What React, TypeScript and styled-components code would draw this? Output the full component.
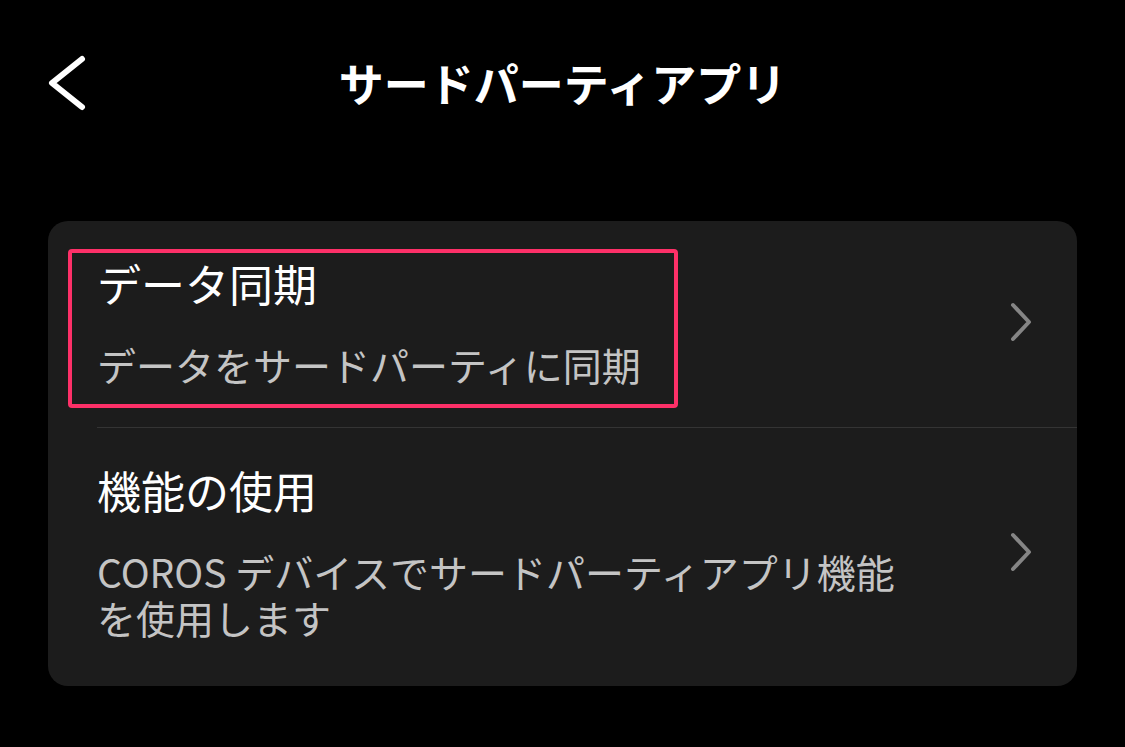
import React, { FC } from "react";
import styled, { createGlobalStyle } from "styled-components";

const GlobalStyles = createGlobalStyle`
html, body {
    margin: 0;
    padding: 0;
    background: #000;
}
body {
    font-family: "Noto Sans CJK JP", "Noto Sans", sans-serif;
    color: #fff;
    width: 1125px;
    height: 747px;
    overflow: hidden;
}
`;

const Page = styled.div`
    display: flex;
    flex-direction: column;
    padding: 0 48px;
`;

const Header = styled.header`
    height: 166px;
    margin-bottom: 55px;
    display: grid;
    grid-template-columns: 60px 1fr 60px;
    align-items: center;
`;

const BackButton = styled.button`
    background: none;
    border: 0;
    padding: 0;
    width: 40px;
    height: 56px;
    display: flex;
    align-items: center;
    cursor: pointer;
    svg {
        display: block;
    }
`;

const Title = styled.h1`
    margin: 0;
    text-align: center;
    font-size: 45px;
    line-height: 56px;
    font-weight: 700;
`;

const Card = styled.section`
    background: #1c1c1c;
    border-radius: 20px;
`;

const Row = styled.div<{ $last?: boolean }>`
    display: flex;
    align-items: center;
    margin-left: 49px;
    padding: 36px 42px ${(p) => (p.$last ? "46px" : "40px")} 0;
    border-bottom: ${(p) => (p.$last ? "none" : "1.5px solid #343434")};
`;

const TextBlock = styled.div<{ $marked?: boolean }>`
    position: relative;
    flex: 0 1 830px;
    &::after {
        content: "";
        display: ${(p) => (p.$marked ? "block" : "none")};
        position: absolute;
        left: -29px;
        top: -8px;
        width: 610px;
        bottom: -21px;
        border: 4px solid #fd3068;
        border-radius: 4px;
        box-sizing: border-box;
        pointer-events: none;
    }
`;

const RowTitle = styled.div`
    font-size: 44px;
    line-height: 52px;
    color: #fff;
`;

const RowSub = styled.div`
    margin-top: 32px;
    font-size: 39px;
    line-height: 46px;
    color: #c4c4c4;
`;

const ChevronBox = styled.span`
    margin-left: auto;
    display: flex;
    svg {
        display: block;
    }
`;

const Chevron: FC = () => (
    <ChevronBox>
        <svg width="28" height="40" viewBox="0 0 28 40">
            <path
                d="M6 3 L22 20 L6 37"
                fill="none"
                stroke="#858585"
                strokeWidth="4"
                strokeLinecap="round"
                strokeLinejoin="round"
            />
        </svg>
    </ChevronBox>
);

const items = [
    {
        title: "データ同期",
        sub: "データをサードパーティに同期",
        marked: true,
    },
    {
        title: "機能の使用",
        sub: "COROS デバイスでサードパーティアプリ機能を使用します",
        marked: false,
    },
];

const App: FC = () => {
    return (
        <>
            <GlobalStyles />
            <Page>
                <Header>
                    <BackButton aria-label="戻る">
                        <svg width="40" height="56" viewBox="0 0 40 56">
                            <path
                                d="M34 4 L4 28 L34 52"
                                fill="none"
                                stroke="#fff"
                                strokeWidth="6"
                                strokeLinecap="round"
                                strokeLinejoin="round"
                            />
                        </svg>
                    </BackButton>
                    <Title>サードパーティアプリ</Title>
                    <span />
                </Header>
                <Card>
                    {items.map((it, i) => (
                        <Row key={it.title} $last={i === items.length - 1}>
                            <TextBlock $marked={it.marked}>
                                <RowTitle>{it.title}</RowTitle>
                                <RowSub>{it.sub}</RowSub>
                            </TextBlock>
                            <Chevron />
                        </Row>
                    ))}
                </Card>
            </Page>
        </>
    );
};

export default App;
